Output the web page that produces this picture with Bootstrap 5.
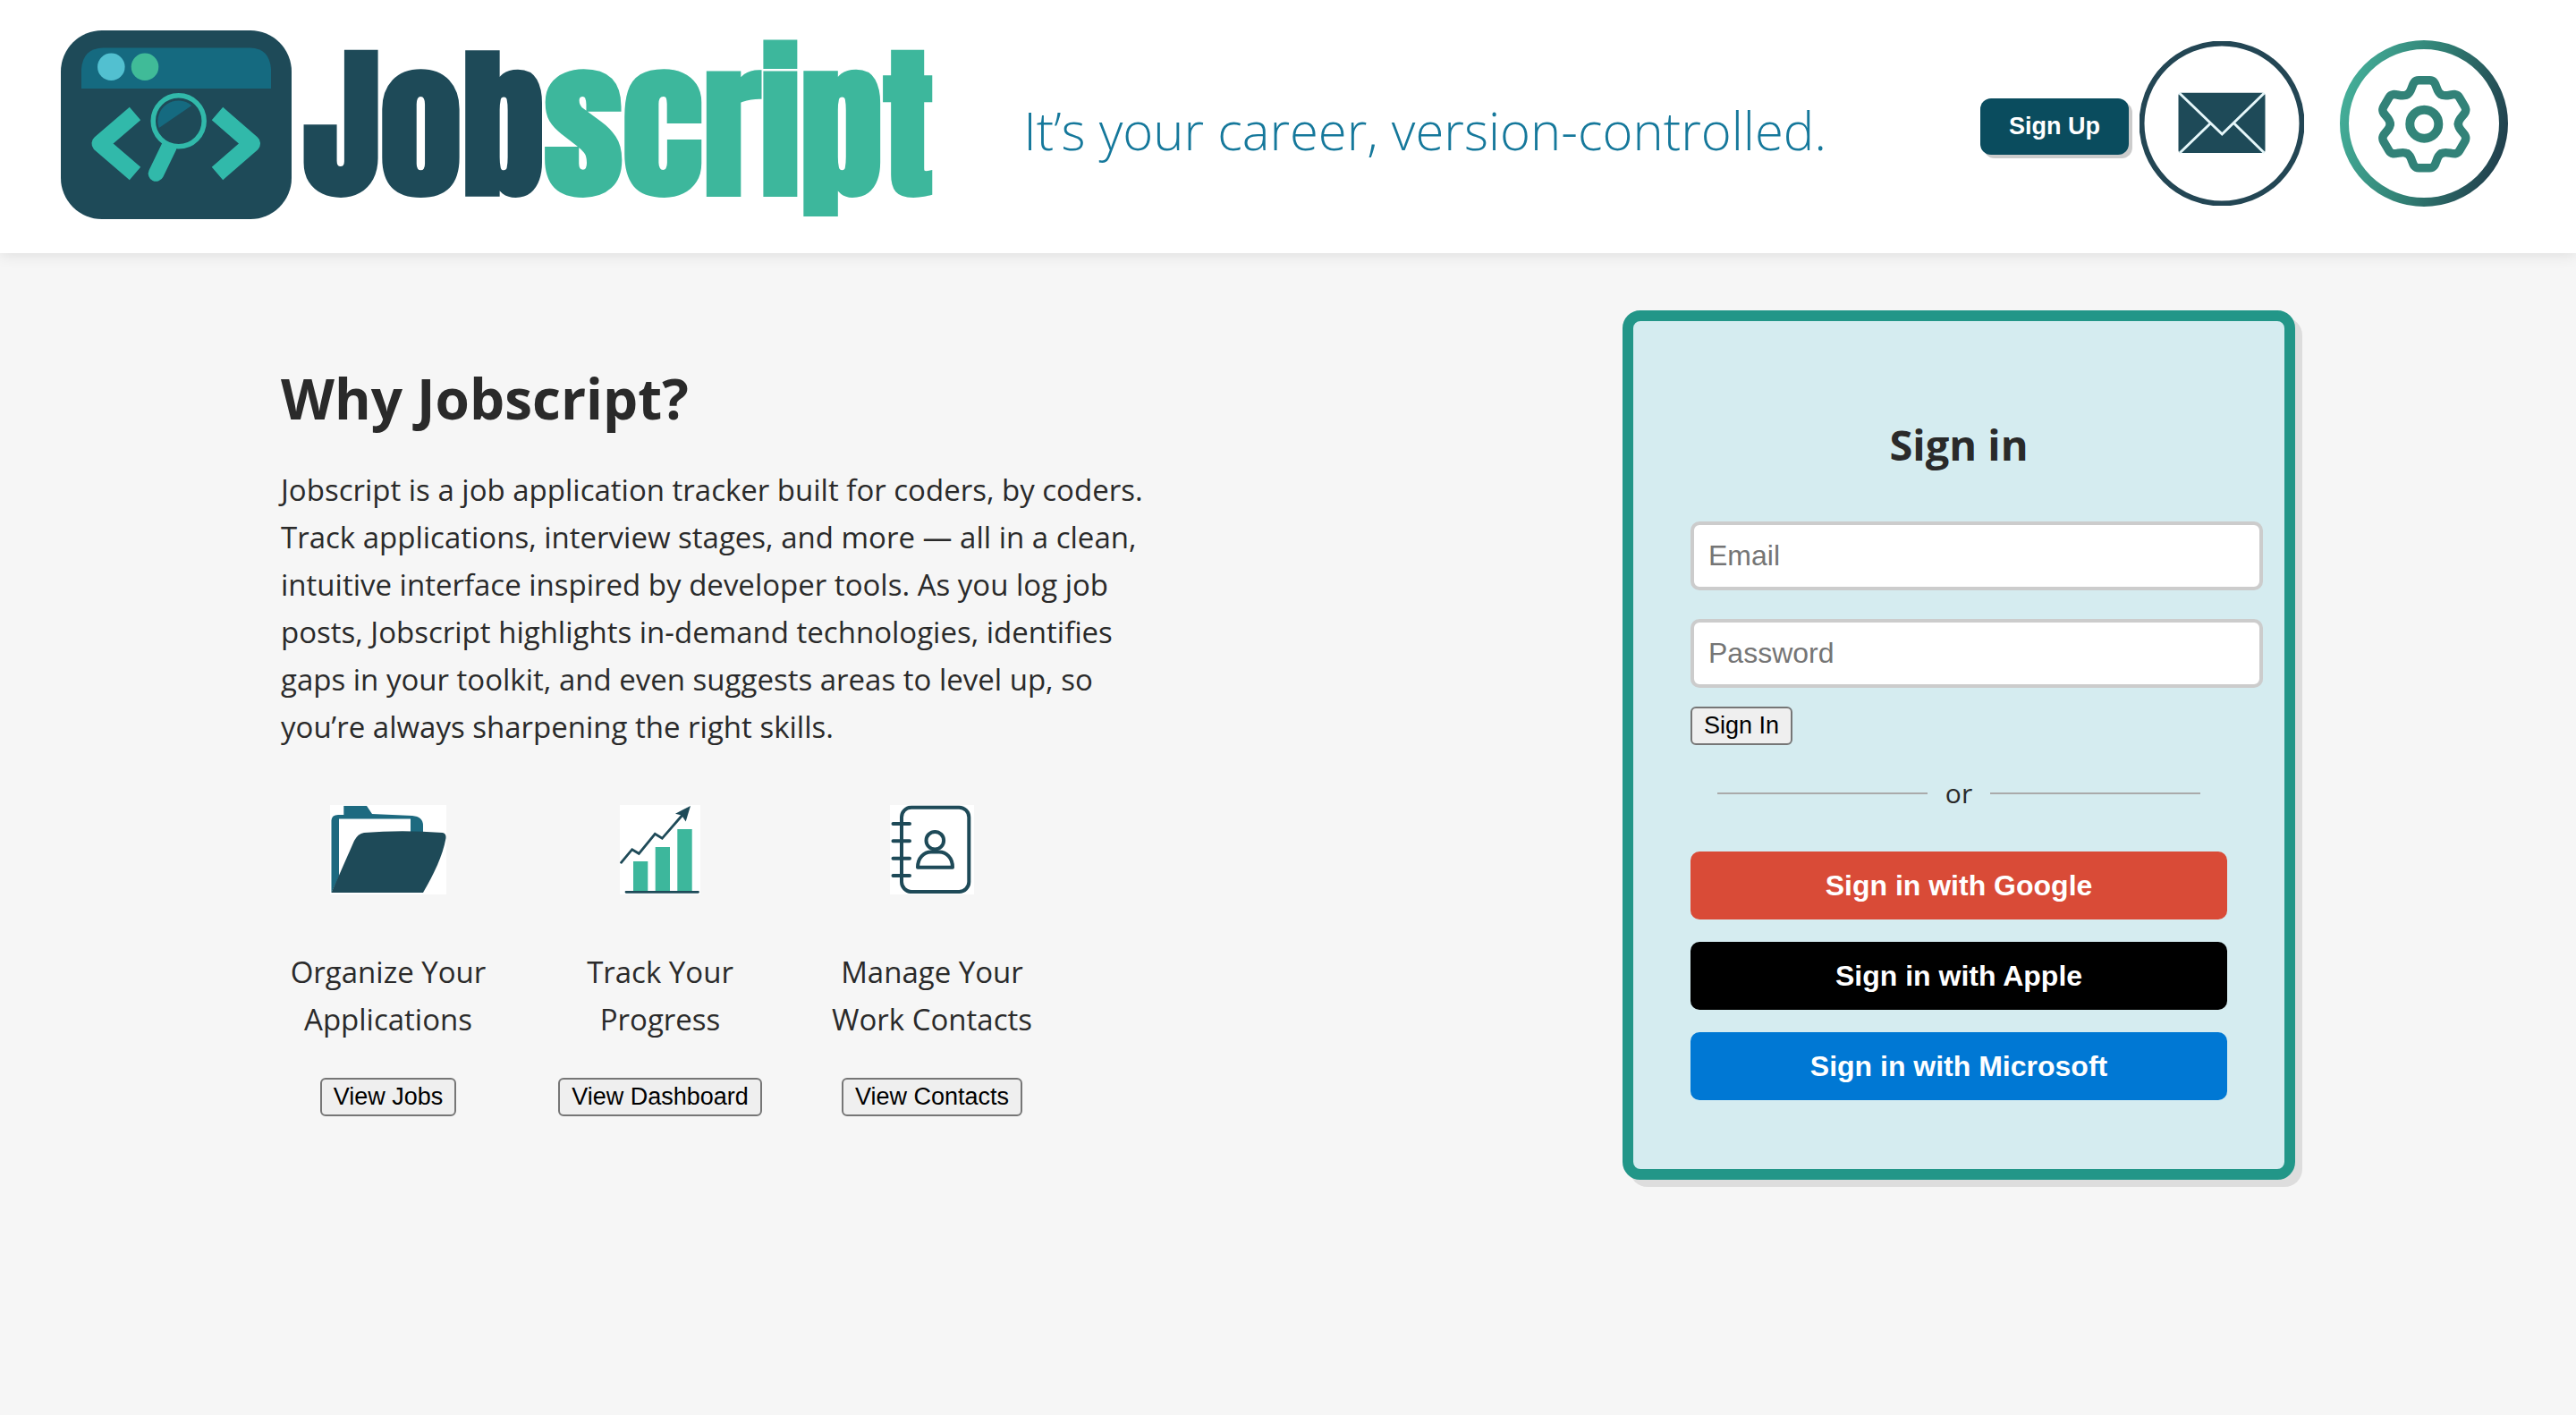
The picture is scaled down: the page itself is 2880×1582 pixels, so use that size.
<!DOCTYPE html>
<html lang="en">
<head>
<meta charset="utf-8">
<meta name="viewport" content="width=device-width, initial-scale=1">
<title>Jobscript</title>
<link href="https://cdn.jsdelivr.net/npm/bootstrap@5.3.0/dist/css/bootstrap.min.css" rel="stylesheet">
<style>
:root{--ink:#1e4a58;--mint:#3db79c;--teal:#229688}
body{font-family:"Open Sans","Noto Sans",sans-serif;background:#f6f6f6;color:#2a2a2a;font-size:33px;line-height:53px}
svg{display:block;flex:none}
.site-head{background:#fff;padding:34px 76px 38px 68px;box-shadow:0 2px 16px rgba(0,0,0,.1)}
.brand{gap:13px;text-decoration:none}
.wordmark{font:900 184px/211px Anton,Impact,sans-serif;color:var(--ink)}
.wordmark b{color:var(--mint);font-weight:900}
.tagline{font-weight:300;font-size:58px;line-height:80px;color:#15789b;padding-top:12px;margin-left:101px}
.round-link{display:block}
.head-links{gap:40px}
.signup{font:bold 27px/31px "Liberation Sans",Arial,sans-serif;color:#fff;background:#0a4c5e;border:0;border-radius:12px;padding:16px 32px;box-shadow:4px 4px 0 #ccc}
.page-body{max-width:2252px;padding-top:64px;padding-bottom:64px}
.pitch{max-width:992px;padding-top:61px}
.pitch h1{font-size:62px;line-height:74px;font-weight:700;margin-bottom:39px}
.pitch p{margin:0}
.features{gap:64px;margin-top:61px}
.feature{flex:0 0 240px;text-align:center}
.feature p{margin:60px 0 39px}
.plain-btn{display:block;font:27px/31px "Liberation Sans",Arial,sans-serif;color:#000;background:#efefef;border:2px solid #767676;border-radius:6px;padding:4px 13px;white-space:nowrap}
.login{width:752px;border:12px solid var(--teal);border-radius:20px;background:#d5ecf0;box-shadow:8px 8px 0 #ddd;padding:108px 64px 77px}
.login h2{font-size:47px;line-height:60px;font-weight:700;text-align:center;margin-bottom:56px}
.fields{gap:32px;margin-right:-40px;margin-bottom:21px}
.fields .form-control{font:32px/37px "Liberation Sans",Arial,sans-serif;border:4px solid #ccc;border-radius:10px;padding:16px;background:#fff}
.fields .form-control::placeholder{color:#757575}
.or-row{gap:20px;padding:0 30px;margin:32px 0 43px;font-size:30px;line-height:44px}
.or-row hr{flex:1;margin:0;border-top:2px solid #aaa;opacity:1}
.providers{gap:25px}
.provider{font:bold 32px/36px "Liberation Sans",Arial,sans-serif;color:#fff;border:0;border-radius:10px;padding:20px}
.google{background:#d94b37}.apple{background:#000}.microsoft{background:#0078d4}
</style>
</head>
<body>
<header class="site-head d-flex align-items-center">
  <a class="brand d-flex align-items-center" href="#">
    <svg width="258" height="211" viewBox="0 0 258 211" aria-hidden="true">
      <rect width="258" height="211" rx="46" fill="#1e4a58"/>
      <path d="M23 65V43Q25 20 47 19.500H212Q233 20 235 43V65z" fill="#156a80"/>
      <circle cx="56.300" cy="40.700" r="15.300" fill="#52c0d0"/><circle cx="94" cy="40.700" r="15.300" fill="#40bb98"/>
      <g fill="none" stroke="#31b9aa" stroke-width="19" stroke-linejoin="round">
        <path d="M83 93L44 126.500L83 160"/><path d="M175 93L213.500 126.500L175 160"/>
      </g>
      <path d="M121 130L106.500 160" stroke="#31b9aa" stroke-width="17.500" stroke-linecap="round"/>
      <circle cx="131.700" cy="101.300" r="28.500" fill="#1e4a58" stroke="#31b9aa" stroke-width="5.500"/>
      <path d="M109.700 109A23 23 0 0 1 146.300 84z" fill="#156a80"/>
    </svg>
    <span class="wordmark">Job<b>script</b></span>
  </a>
  <div class="tagline">It’s your career, version-controlled.</div>
  <div class="d-flex align-items-center ms-auto">
    <button class="signup mt-1" type="button">Sign Up</button>
    <nav class="head-links d-flex align-items-center ms-2 ps-1 mb-1" aria-label="Account">
      <a class="round-link" href="#" aria-label="Messages">
        <svg width="184" height="184" viewBox="0 0 184 184">
          <circle cx="92" cy="92" r="89.500" fill="#fff" stroke="#234654" stroke-width="6"/>
          <rect x="43.500" y="57.700" width="97" height="67.300" rx="3" fill="#1e4a58"/>
          <path d="M44.500 58L92.300 104L139.500 58M78.700 92.500L45 125M105.300 91.500L139.500 125" fill="none" stroke="#e6f7fa" stroke-width="3"/>
        </svg>
      </a>
      <a class="round-link" href="#" aria-label="Settings">
        <svg width="188" height="186" viewBox="0 0 188 186">
          <defs>
            <linearGradient id="ring" gradientUnits="userSpaceOnUse" x1="0" y1="60" x2="188" y2="110"><stop offset="0" stop-color="#45b09a"/><stop offset=".5" stop-color="#318074"/><stop offset="1" stop-color="#213f4d"/></linearGradient>
            <linearGradient id="cog" gradientUnits="userSpaceOnUse" x1="-54" y1="0" x2="54" y2="0"><stop offset="0" stop-color="#378e80"/><stop offset="1" stop-color="#2d7970"/></linearGradient>
            <path id="tooth" d="M-19-33C-12-37-15-49-6-49H6C15-49 12-37 19-33"/>
          </defs>
          <ellipse cx="94" cy="93" rx="89" ry="88" fill="#fff" stroke="url(#ring)" stroke-width="10"/>
          <g transform="translate(94.300 93.700)" fill="none" stroke="#328278" stroke-width="9.500" stroke-linecap="round">
            <use href="#tooth"/><use href="#tooth" transform="rotate(60)"/><use href="#tooth" transform="rotate(120)"/><use href="#tooth" transform="rotate(180)"/><use href="#tooth" transform="rotate(240)"/><use href="#tooth" transform="rotate(300)"/>
            <circle r="16" stroke="url(#cog)" stroke-width="10"/>
          </g>
        </svg>
      </a>
    </nav>
  </div>
</header>

<main class="page-body container-fluid px-0 d-flex justify-content-between align-items-start">
  <section class="pitch">
    <h1>Why Jobscript?</h1>
    <p>Jobscript is a job application tracker built for coders, by coders. Track applications, interview stages, and more — all in a clean, intuitive interface inspired by developer tools. As you log job posts, Jobscript highlights in-demand technologies, identifies gaps in your toolkit, and even suggests areas to level up, so you’re always sharpening the right skills.</p>
    <div class="features d-flex">
      <div class="feature">
        <svg class="mx-auto" width="130" height="100" viewBox="0 0 130 100" aria-hidden="true">
          <path fill="#fff" d="M0 0H130V100H0z"/>
          <path d="M1.500 98V17Q2 11 9 11H15.300V1H41L47 10L92 12Q104 13 104 23V32H90V15.500H10V80z" fill="#1d6a80"/>
          <path d="M1.500 98L27 40Q31 32 38 31Q80 27.500 126 31Q130 32 129.500 37C126 57 116 77 104 98z" fill="#1e4a58"/>
        </svg>
        <p>Organize Your Applications</p>
        <button class="plain-btn mx-auto" type="button">View Jobs</button>
      </div>
      <div class="feature">
        <svg class="mx-auto" width="90" height="100" viewBox="0 0 90 100" aria-hidden="true">
          <path fill="#fff" d="M0 0H90V100H0z"/>
          <path d="M15 63H31.300V97H15zM39.700 47H56V97H39.700zM64.300 27H80.700V97H64.300z" fill="#3db79c"/>
          <path d="M7 97.300H87.500M1.500 64.300L13.700 49.700L21.300 54.300L39.300 32.300L47.300 37.300L71 10" fill="none" stroke="#1e4a58" stroke-width="2.800" stroke-linecap="round"/>
          <path d="M79 1L62 9.700L69 11.500L73.700 18.500z" fill="#1e4a58"/>
        </svg>
        <p>Track Your Progress</p>
        <button class="plain-btn mx-auto" type="button">View Dashboard</button>
      </div>
      <div class="feature">
        <svg class="mx-auto" width="94" height="100" viewBox="0 0 94 100" aria-hidden="true">
          <path fill="#fff" d="M0 0H94V100H0z"/>
          <g fill="none" stroke="#1e4a58" stroke-width="4" stroke-linecap="round" stroke-linejoin="round">
            <rect x="13" y="2.700" width="75.300" height="94.300" rx="11"/>
            <path d="M3.500 21H22M3.500 40.300H22M3.500 59.700H22M3.500 79H22"/>
            <circle cx="50.300" cy="39.700" r="9.800"/>
            <path d="M31 69.700C31 59 38 52.500 46 52.500H55C63 52.500 70 59 70 69.700z"/>
          </g>
        </svg>
        <p>Manage Your Work Contacts</p>
        <button class="plain-btn mx-auto" type="button">View Contacts</button>
      </div>
    </div>
  </section>

  <section class="login flex-shrink-0">
    <h2>Sign in</h2>
    <form>
      <div class="fields d-flex flex-column">
        <div><label class="visually-hidden" for="email">Email</label><input class="form-control" id="email" type="email" placeholder="Email"></div>
        <div><label class="visually-hidden" for="password">Password</label><input class="form-control" id="password" type="password" placeholder="Password"></div>
      </div>
      <button class="plain-btn" type="submit">Sign In</button>
    </form>
    <div class="or-row d-flex align-items-center"><hr><span>or</span><hr></div>
    <div class="providers d-flex flex-column">
      <button class="provider google" type="button">Sign in with Google</button>
      <button class="provider apple" type="button">Sign in with Apple</button>
      <button class="provider microsoft" type="button">Sign in with Microsoft</button>
    </div>
  </section>
</main>
<script src="https://cdn.jsdelivr.net/npm/bootstrap@5.3.0/dist/js/bootstrap.bundle.min.js"></script>
</body>
</html>
